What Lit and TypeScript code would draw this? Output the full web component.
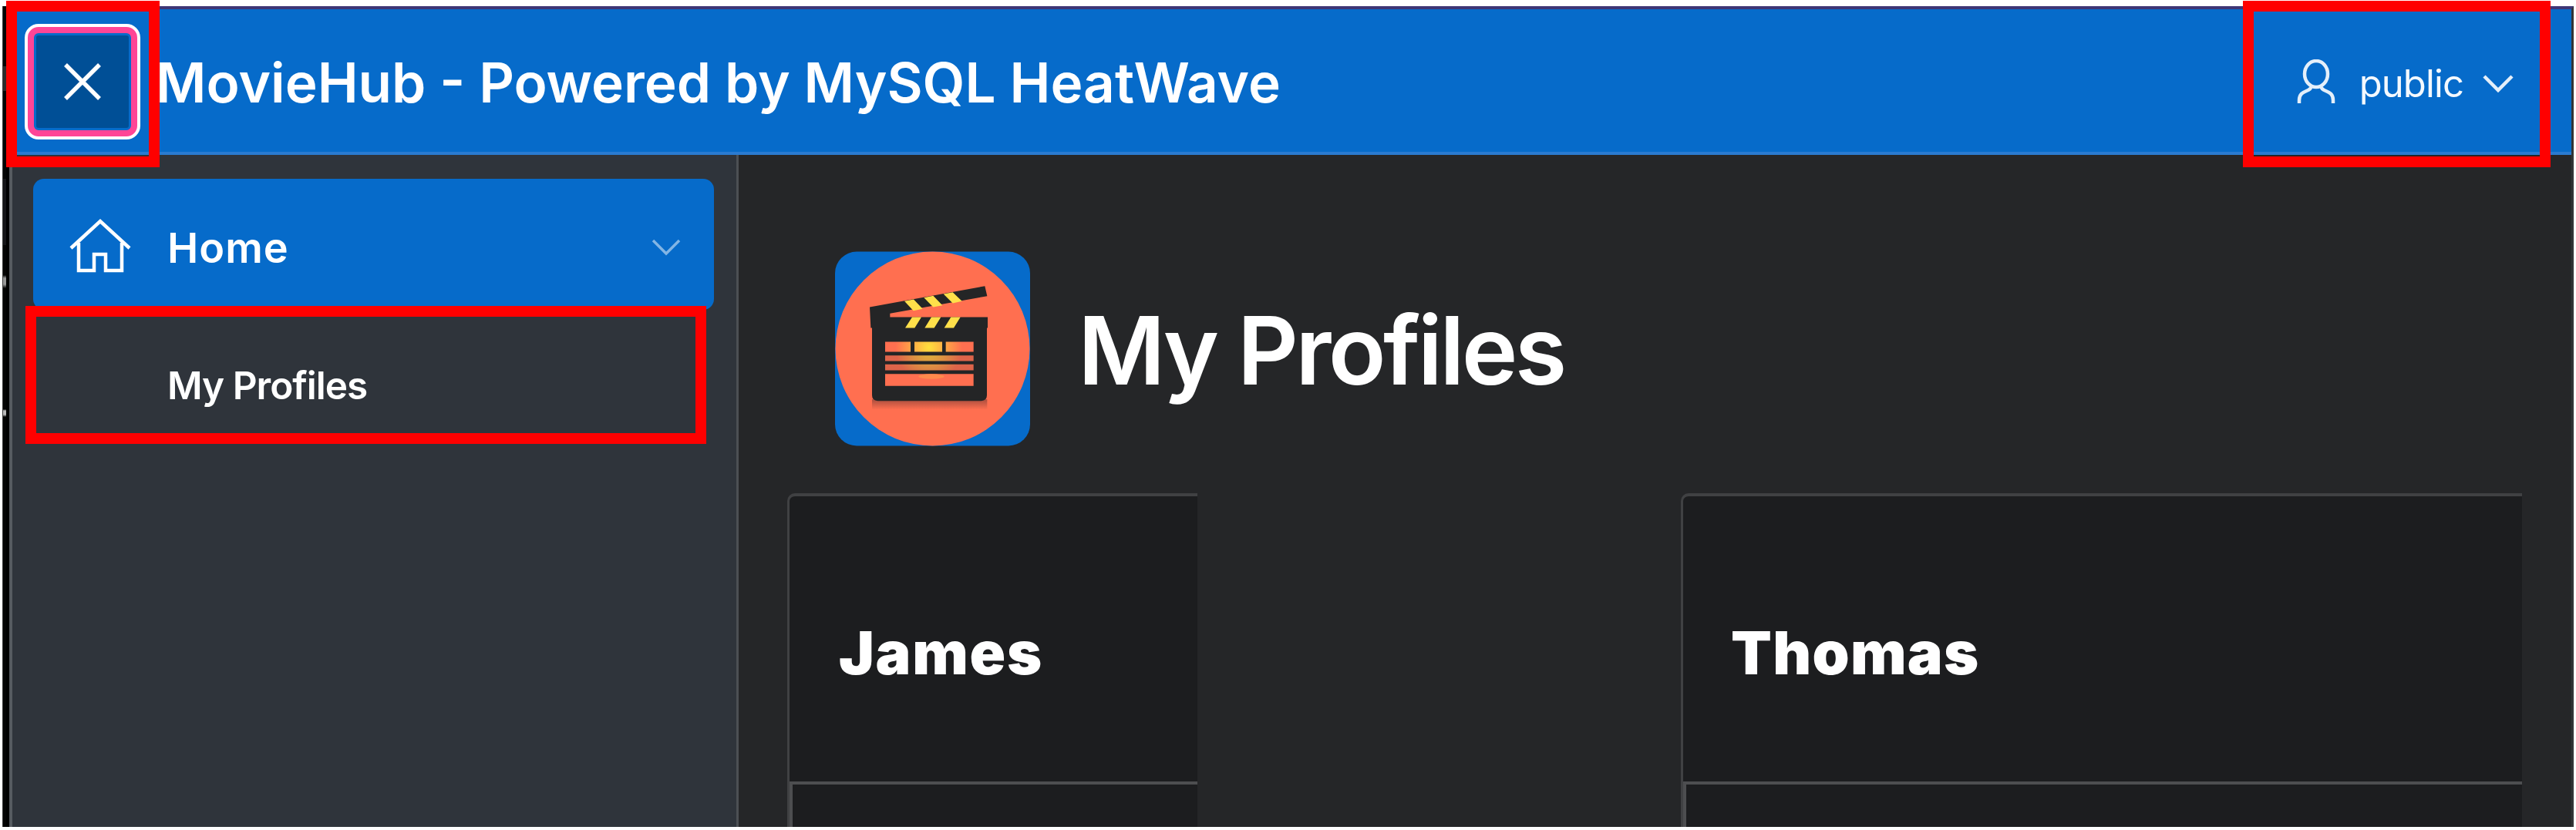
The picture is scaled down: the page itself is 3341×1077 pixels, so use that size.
import { LitElement, html, css } from "lit";
import { customElement } from "lit/decorators.js";

@customElement("app-root")
export class AppRoot extends LitElement {
  static styles = css`
    :host { display: block; width: 3341px; height: 1077px; background: #fff; overflow: hidden; position: relative;
      font-family: Inter, "Liberation Sans", sans-serif; color: #fff; }
    * { box-sizing: border-box; }
    svg { display: block; flex: none; }
    .window { margin: 0 3px; width: 3335px; height: 1073px; padding-top: 8px; display: flex; }
    .edge { width: 9px; flex: none; border-left: 1px solid #3a3a3a; background: #000; padding-right: 4px; }
    .edge-in { height: 100%; background: linear-gradient(#050505 78px, #2c2c2c 78px 110px, #050505 110px 224px, #151518 224px 310px, #050505 310px 349px, #999 353px 361px, #050505 366px 523px, #bbb 525px 530px, #050505 533px); }
    .app { flex: 1; display: flex; flex-direction: column; background: #252628; border-right: 3px solid #333436; border-top: 4px solid #3e3676; }
    .header { height: 189px; flex: none; background: #066bca; border-bottom: 4px solid #2a7bd1; display: flex; align-items: center; padding: 3px 0 0 20px; }
    .toggle { width: 150px; height: 150px; border: 4px solid #fff; border-radius: 18px; background: #ff4596; padding: 8px; flex: none; }
    .toggle-in { width: 100%; height: 100%; background: #004f96; border: 3px solid #066bca; border-radius: 6px; display: flex; align-items: center; justify-content: center; }
    .title { margin: 2px 0 0 20px; font-size: 71px; font-weight: 600; line-height: 80px; white-space: nowrap; }
    .user { margin-left: auto; margin-right: 75px; display: flex; align-items: center; }
    .user-name { font-size: 49px; line-height: 60px; margin: 5px 25px 0 30px; letter-spacing: -.9px; color: #f4f9fe; }
    .user-arrow { margin-top: 5px; }
    .body { flex: 1; display: flex; min-height: 0; }
    .side { width: 946px; flex: none; background: #2f343b; border-left: 4px solid #565b60; border-right: 3px solid #4c5054; padding: 31px 29px 0 27px; }
    .home { height: 170px; background: #066bca; border-radius: 14px; display: flex; align-items: center; padding: 4px 43px 0 47px; }
    .home-label { font-size: 54px; font-weight: 600; line-height: 60px; margin: 6px 0 0 47px; letter-spacing: 1px; flex: 1; }
    .home-arrow { margin-top: 4px; }
    .sub { height: 174px; display: flex; align-items: center; padding: 22px 0 0 174px; font-size: 49.5px; font-weight: 600; line-height: 60px; letter-spacing: -1px; }
    .main { flex: 1; padding: 125px 64px 0 63px; display: flex; flex-direction: column; }
    .hero { display: flex; align-items: center; height: 253px; padding-left: 62px; }
    .h1 { font-size: 123px; font-weight: 600; line-height: 140px; margin: 4px 0 0 62px; white-space: nowrap; letter-spacing: -3.7px; }
    .cards { margin-top: 61px; flex: 1; display: flex; justify-content: space-between; }
    .card { background: #1c1d1f; border: 4px solid #404143; border-width: 4px 0 0 3px; border-top-left-radius: 10px; display: flex; flex-direction: column; }
    .card.first { width: 532px; }
    .card.second { width: 1091px; }
    .name { height: 370px; flex: none; padding: 158px 0 0 64px; font-size: 77px; line-height: 90px; font-weight: 900; letter-spacing: 1.7px; white-space: nowrap; }
    .second .name { padding-left: 62px; letter-spacing: 1.3px; }
    .below { flex: 1; border-top: 4px solid #4d4e50; border-left: 4px solid #4d4e50; }
    .mark { position: absolute; border: 14px solid #f00; }
    .mark.a { left: 8px; top: 1px; width: 199px; height: 216px; }
    .mark.b { left: 2909px; top: 1px; width: 399px; height: 216px; }
    .mark.c { left: 33px; top: 397px; width: 883px; height: 179px; }
  `;

  render() {
    return html`
      <div class="window">
        <div class="edge"><div class="edge-in"></div></div>
        <div class="app">
          <div class="header">
            <div class="toggle"><div class="toggle-in">
              <svg width="48" height="48" viewBox="0 0 48 48" stroke="#fff" stroke-width="5.500"><path d="M2 2L46 46M46 2L2 46" /></svg>
            </div></div>
            <div class="title">MovieHub - Powered by MySQL HeatWave</div>
            <div class="user">
              <svg width="52" height="58" viewBox="0 0 52 58" fill="none" stroke="#e4effa" stroke-width="4.500">
                <ellipse cx="26" cy="19" rx="15" ry="17" />
                <path d="M20 35C19 43 4 39 4 53V57M32 35C33 43 48 39 48 53V57" />
              </svg>
              <div class="user-name">public</div>
              <svg class="user-arrow" width="40" height="24" viewBox="0 0 40 24" fill="none" stroke="#e4effa" stroke-width="4.500"><path d="M2 2L20 20L38 2" /></svg>
            </div>
          </div>
          <div class="body">
            <div class="side">
              <div class="home">
                <svg width="80" height="72" viewBox="0 0 80 72" fill="none" stroke="#fff" stroke-width="4.500">
                  <path d="M2 39L40 4L78 39M12 32V68H32V47H47V68H68V32" />
                </svg>
                <div class="home-label">Home</div>
                <svg class="home-arrow" width="38" height="22" viewBox="0 0 38 22" fill="none" stroke="#82b5e5" stroke-width="3.500"><path d="M2 2L19 19L36 2" /></svg>
              </div>
              <div class="sub">My Profiles</div>
            </div>
            <div class="main">
              <div class="hero">
                <svg width="253" height="253" viewBox="70 77 759 756">
                  <defs>
                    <radialGradient id="glow" gradientUnits="userSpaceOnUse" cx="435" cy="450" r="130"><stop offset="0" stop-color="#ffe13c" /><stop offset="1" stop-color="#ff6f50" /></radialGradient>
                    <linearGradient id="shade" x1="0" x2="0" y1="0" y2="1"><stop offset="0" stop-color="#a94e3e" /><stop offset="1" stop-color="#ff6f50" /></linearGradient>
                  </defs>
                  <rect x="70" y="77" width="759" height="756" rx="84" fill="#066bca" />
                  <circle cx="449.500" cy="455" r="378" fill="#ff6f50" />
                  <rect x="214" y="652" width="448" height="40" fill="url(#shade)" />
                  <path fill="#242526" d="M205 293L653 211L662 250L284 318V332H664V374H661V636Q661 658 639 658H236Q214 658 214 636V374H209Z" />
                  <g fill="#ffe04a">
                    <path d="M340 270L376 263L411 300L375 307ZM416 256L452 249L488 286L452 293ZM492 242L528 235L564 270L528 278Z" />
                    <path d="M370 332H406L380 374H343ZM445 332H482L456 374H419ZM521 332H558L532 374H495Z" />
                  </g>
                  <g fill="url(#glow)">
                    <path d="M265 428H364V467H265ZM379 428H487V467H379ZM501 428H609V467H501Z" />
                    <path opacity=".85" d="M265 481H609V503H265ZM265 516H609V539H265Z" />
                  </g>
                  <path fill="#ff6f50" d="M265 553H609V600H265Z" />
                  <ellipse cx="445" cy="563" rx="50" ry="10" fill="#ff8a4c" />
                </svg>
                <div class="h1">My Profiles</div>
              </div>
              <div class="cards">
                <div class="card first"><div class="name">James</div><div class="below"></div></div>
                <div class="card second"><div class="name">Thomas</div><div class="below"></div></div>
              </div>
            </div>
          </div>
        </div>
      </div>
      <div class="mark a"></div><div class="mark b"></div><div class="mark c"></div>
    `;
  }
}
